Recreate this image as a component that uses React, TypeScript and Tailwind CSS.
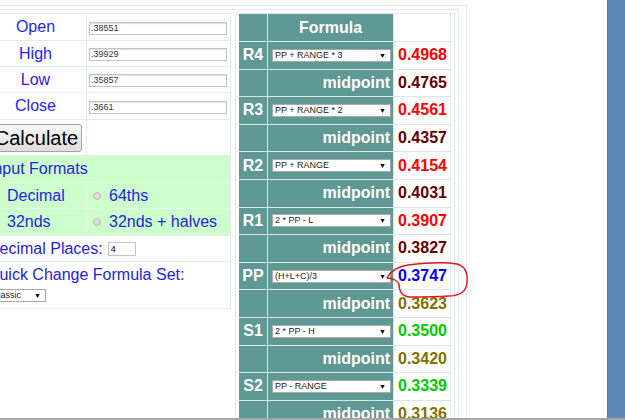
/**
 * PivotCalc - pivot point calculator panel (inputs on the left, formula table on the right)
 */

type Row =
  | { kind: "level"; label: string; formula: string; value: string; color: string }
  | { kind: "mid"; value: string; color: string };

const rows: Row[] = [
  { kind: "level", label: "R4", formula: "PP + RANGE * 3", value: "0.4968", color: "text-[#ff0000]" },
  { kind: "mid", value: "0.4765", color: "text-[#660000]" },
  { kind: "level", label: "R3", formula: "PP + RANGE * 2", value: "0.4561", color: "text-[#ff0000]" },
  { kind: "mid", value: "0.4357", color: "text-[#660000]" },
  { kind: "level", label: "R2", formula: "PP + RANGE", value: "0.4154", color: "text-[#ff0000]" },
  { kind: "mid", value: "0.4031", color: "text-[#660000]" },
  { kind: "level", label: "R1", formula: "2 * PP - L", value: "0.3907", color: "text-[#ff0000]" },
  { kind: "mid", value: "0.3827", color: "text-[#660000]" },
  { kind: "level", label: "PP", formula: "(H+L+C)/3", value: "0.3747", color: "text-[#0000ff]" },
  { kind: "mid", value: "0.3623", color: "text-[#807000]" },
  { kind: "level", label: "S1", formula: "2 * PP - H", value: "0.3500", color: "text-[#00cc00]" },
  { kind: "mid", value: "0.3420", color: "text-[#807000]" },
  { kind: "level", label: "S2", formula: "PP - RANGE", value: "0.3339", color: "text-[#00cc00]" },
  { kind: "mid", value: "0.3136", color: "text-[#807000]" },
];

// heights include the 1px bottom border
const inputs = [
  { label: "Open", value: ".38551", h: "h-[27px]", color: "text-[#1e1eff]", pad: "pt-[2px]" },
  { label: "High", value: ".39929", h: "h-[26px]", color: "text-[#1e1eff]", pad: "pt-[1px]" },
  { label: "Low", value: ".35857", h: "h-[26px]", color: "text-[#3a14e6]", pad: "pt-[1px]" },
  { label: "Close", value: ".3661", h: "h-[27px]", color: "text-[#1e1eff]", pad: "pt-[2px]" },
];

function FakeSelect({ text, width }: { text: string; width: string }) {
  return (
    <div
      className={`flex h-[13px] ${width} items-center justify-between border border-[#a9a9a9] bg-white pl-[2px] pr-[4px] text-[9px] leading-none text-[#222]`}
    >
      <span>{text}</span>
      <span className="text-[7px] text-black">▼</span>
    </div>
  );
}

function Radio() {
  return <span className="inline-block h-[8px] w-[8px] rounded-full border border-[#b9b9b9] bg-[#dcdcdc]" />;
}

function LeftTable() {
  return (
    <div className="w-[247px] border border-[#e4e8ef] text-[16px]">
      {/* OHLC inputs */}
      {inputs.map((r) => (
        <div key={r.label} className={`flex ${r.h} border-b border-[#e4e8ef]`}>
          <div className={`flex w-[102px] items-center justify-center border-r border-[#e4e8ef] ${r.color}`}>
            {r.label}
          </div>
          <div className={`flex flex-1 items-center pl-[2px] pr-[3px] ${r.pad}`}>
            <div className="flex h-[13px] w-full items-center border border-[#c4c4c4] pl-[1px] text-[9px] leading-none text-[#333] shadow-[inset_0_1px_1px_#e0e0e0]">
              {r.value}
            </div>
          </div>
        </div>
      ))}

      {/* Calculate */}
      <div className="flex h-[36px] border-b border-[#e4e8ef]">
        <div className="flex w-[102px] items-center border-r border-[#e4e8ef] pl-[6px]">
          <div className="flex h-[28px] w-[91px] items-center justify-center rounded-[3px] border border-[#a3a3a3] bg-gradient-to-b from-[#f7f7f7] to-[#dedede] text-[20px] text-black">
            Calculate
          </div>
        </div>
        <div className="flex-1" />
      </div>

      {/* Input formats */}
      <div className="bg-[#ccffcc] text-[#2424e0]">
        <div className="flex h-[27px] items-center border-b border-[#e3f7e3] pl-[4px]">Input Formats</div>
        <div className="flex h-[26px] border-b border-[#e3f7e3]">
          <div className="flex w-[102px] items-center gap-[8px] border-r border-[#e3f7e3] pl-[6px]">
            <Radio />
            Decimal
          </div>
          <div className="flex flex-1 items-center gap-[8px] pl-[6px]">
            <Radio />
            64ths
          </div>
        </div>
        <div className="flex h-[27px] border-b border-[#e4e8ef]">
          <div className="flex w-[102px] items-center gap-[8px] border-r border-[#e3f7e3] pl-[6px]">
            <Radio />
            32nds
          </div>
          <div className="flex flex-1 items-center gap-[8px] pl-[6px]">
            <Radio />
            32nds + halves
          </div>
        </div>
      </div>

      {/* Decimal places */}
      <div className="flex h-[26px] items-center border-b border-[#e4e8ef] pl-[3px] text-[#2424e0]">
        Decimal Places:
        <div className="ml-[5px] mt-[1px] flex h-[14px] w-[28px] items-center border border-[#c4c4c4] pl-[2px] text-[9px] leading-none text-black">
          4
        </div>
      </div>

      {/* Quick change */}
      <div className="h-[46px] pl-[2px] pt-[4px] text-[#2424e0]">
        <div className="leading-[18px]">Quick Change Formula Set:</div>
        <div className="ml-[2px] mt-[5px]">
          <FakeSelect text="Classic" width="w-[57px]" />
        </div>
      </div>
    </div>
  );
}

function RightTable() {
  return (
    <div className="ml-[4px] h-[600px] w-[220px] border-x border-t border-[#e4e8ef] px-[3px]">
      <div className="grid grid-cols-[28px_125px_57px] gap-px bg-[#d9e5e6] text-[16px] font-bold">
        <div className="h-[27px] bg-[#5f9994]" />
        <div className="flex h-[27px] items-center justify-center bg-[#5f9994] text-white">Formula</div>
        <div className="h-[27px] border-r border-[#e4e8ef] bg-white" />

        {rows.map((r, i) =>
          r.kind === "level" ? (
            <div key={i} className="contents">
              <div className="flex h-[26.6px] items-center justify-center bg-[#5f9994] text-white">{r.label}</div>
              <div className="flex h-[26.6px] items-center bg-[#5f9994] pl-[4px] font-normal">
                <FakeSelect text={r.formula} width="w-[119px]" />
              </div>
              <div className={`flex h-[26.6px] items-center border-r border-[#e4e8ef] bg-white pl-[4px] ${r.color}`}>
                {r.value}
              </div>
            </div>
          ) : (
            <div key={i} className="contents">
              <div className="h-[26.6px] bg-[#5f9994]" />
              <div className="flex h-[26.6px] items-center justify-end bg-[#5f9994] pr-[3px] text-white">midpoint</div>
              <div className={`flex h-[26.6px] items-center border-r border-[#e4e8ef] bg-white pl-[4px] ${r.color}`}>
                {r.value}
              </div>
            </div>
          )
        )}
      </div>
    </div>
  );
}

export default function App() {
  return (
    <div className="flex h-[420px] w-[625px] flex-col overflow-hidden bg-white font-['Liberation_Sans',Arial,sans-serif]">
      <div className="flex h-[418px]">
        <div className="relative w-[607px] overflow-hidden">
          <div className="ml-[-30px] mt-[5px] h-[600px] w-[497px] border-r border-t border-[#e6e8ef]">
            <div className="mr-[7px] mt-[3px] h-[600px] border-r border-t border-[#e6e8ef]">
              <div className="flex items-start pl-[14px] pt-[3px]">
                <LeftTable />
                <RightTable />
              </div>
            </div>
          </div>

          {/* hand-drawn red mark around the pivot value */}
          <svg className="pointer-events-none absolute left-0 top-0" width="607" height="418" viewBox="0 0 607 418">
            <path
              d="M399 285 C398 281 393 278 387 278 C390 272 396 267 408 265 C425 263 445 262 457 264 C465 266 468 273 467 283 C466 292 460 296 448 296 C435 297 418 297 409 297 C402 296 399 291 399 284"
              fill="none"
              stroke="#e3161b"
              strokeWidth="1.4"
              strokeLinecap="round"
              strokeLinejoin="round"
            />
          </svg>
        </div>
        <div className="w-[18px] border-l border-[#4d79a6] bg-[#5b87b4]" />
      </div>
      <div className="h-[2px] bg-[#a6a6a6]" />
    </div>
  );
}
